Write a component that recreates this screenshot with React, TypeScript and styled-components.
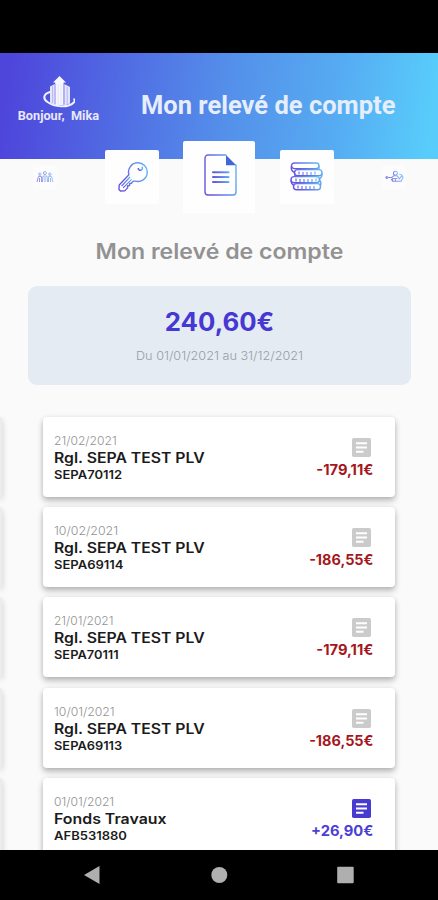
import React from 'react';
import styled, { createGlobalStyle, css } from 'styled-components';

const GlobalStyle = createGlobalStyle`
  *, *::before, *::after { box-sizing: border-box; }
  body { margin: 0; background: #000; font-family: Inter, 'Open Sans', sans-serif; }
`;

const Screen = styled.main`
  width: 100%;
  max-width: 438px;
  height: 900px;
  display: flex;
  flex-direction: column;
  overflow: hidden;
  background: #000;
`;

const StatusBar = styled.div`
  flex: 0 0 52.6px;
  background: #000;
`;

const Header = styled.header`
  flex: 0 0 106px;
  display: flex;
  align-items: flex-start;
  padding: 23.4px 0 0 17.5px;
  background: linear-gradient(97deg, #4e45db 2%, #5066e2 24%, #5490ea 52%, #56abf2 76%, #58cdfb 98%);
`;

const Greeting = styled.div`
  width: 82px;
  display: flex;
  flex-direction: column;
  align-items: center;
`;

const wide = css<{ $wide?: number }>`
  display: block;
  white-space: pre;
  transform: scaleX(${({ $wide = 1 }) => $wide});
`;

const GreetingText = styled.span<{ $wide?: number }>`
  ${wide}
  font: 700 12px/16px Roboto, sans-serif;
  color: #e9e8fc;
`;

const HeaderTitle = styled.h1<{ $wide?: number }>`
  ${wide}
  transform-origin: left;
  margin: 15px 0 0 41.5px;
  font: 700 25px/30px Roboto, sans-serif;
  color: #e6eefc;
`;

const Body = styled.section`
  flex: 1;
  min-height: 0;
  display: flex;
  flex-direction: column;
  background: #fafafa;
`;

const Tabs = styled.nav`
  flex: 0 0 72px;
  margin-top: -18px;
  padding-left: 1px;
  display: grid;
  grid-template-columns: repeat(5, 1fr);
  align-items: center;
  justify-items: center;
`;

const Tab = styled.button<{ $size: number }>`
  width: ${({ $size }) => $size}px;
  height: ${({ $size }) => $size}px;
  display: flex;
  align-items: center;
  justify-content: center;
  padding: 0;
  border: 0;
  border-radius: 2px;
  background: ${({ $size }) => ($size < 40 ? '#fcfcfc' : '#fefefe')};
`;

const PageTitle = styled.h2<{ $wide?: number }>`
  ${wide}
  margin: 26.4px 0 0 1px;
  text-align: center;
  font-size: 21px;
  line-height: 26px;
  font-weight: 600;
  color: #929292;
`;

const Balance = styled.div`
  flex: 0 0 99px;
  margin: 21px 27px 0 28px;
  padding-top: 20px;
  border-radius: 9px;
  background: #e5ebf3;
  text-align: center;
`;

const BalanceAmount = styled.strong<{ $wide?: number }>`
  ${wide}
  font-size: 25px;
  line-height: 32px;
  font-weight: 700;
  color: #4638d2;
`;

const BalancePeriod = styled.span<{ $wide?: number }>`
  ${wide}
  margin-top: 10px;
  font-size: 12px;
  line-height: 16px;
  font-weight: 300;
  color: #989ca3;
`;

const Carousel = styled.div`
  flex: 1;
  min-height: 0;
  margin-top: 16px;
  padding-top: 16px;
  display: grid;
  grid-template-columns: 1.5px 352px;
  column-gap: 41.5px;
  overflow: hidden;
`;

const Page = styled.div`
  display: flex;
  flex-direction: column;
  gap: 10.25px;
`;

const cardShadow = css`
  box-shadow: 0 4px 6px rgba(0, 0, 0, 0.22), 0 1px 5px rgba(0, 0, 0, 0.12);
`;

const Card = styled.article`
  ${cardShadow}
  flex: 0 0 80px;
  display: flex;
  justify-content: space-between;
  padding: 15px 22px 0 11px;
  border-radius: 4px;
  background: #fff;
`;

const CardEdge = styled.div`
  ${cardShadow}
  flex: 0 0 80px;
  border-radius: 0 4px 4px 0;
  background: #ececec;
`;

const Details = styled.div`
  display: flex;
  flex-direction: column;
  align-items: flex-start;
`;

const Line = styled.span<{ $wide?: number }>`
  ${wide}
  transform-origin: left;
  line-height: 17px;
`;

const DateLine = styled(Line)`
  font-size: 12px;
  font-weight: 300;
  color: #929292;
`;

const LabelLine = styled(Line)`
  font-size: 14px;
  font-weight: 600;
  color: #1b1b1b;
`;

const CodeLine = styled(Line)`
  font-size: 12px;
  font-weight: 600;
  color: #1b1b1b;
`;

const Side = styled.div`
  display: flex;
  flex-direction: column;
  align-items: flex-end;
  padding-top: 6px;
`;

const NoteIcon = styled.svg<{ $credit: boolean }>`
  width: 19px;
  height: 19px;
  margin-right: 2.5px;
  color: ${({ $credit }) => ($credit ? '#473bd0' : '#cbcbcb')};
`;

const Amount = styled.span<{ $wide?: number; $credit: boolean }>`
  ${wide}
  transform-origin: right;
  margin-top: 4px;
  font-size: 14px;
  line-height: 18px;
  font-weight: 700;
  color: ${({ $credit }) => ($credit ? '#4b40d4' : '#a5171c')};
`;

const SystemNav = styled.footer`
  flex: 0 0 50.5px;
  display: grid;
  grid-template-columns: repeat(3, 126.5px);
  justify-content: center;
  align-items: center;
  justify-items: center;
  background: #000;
`;

const NavShape = styled.svg`
  width: 20px;
  height: 20px;
  fill: #afafaf;
`;

const Gradient = ({ id }: { id: string }) => (
  <defs>
    <linearGradient id={id} x1="0" x2="1" y1="0.3" y2="0">
      <stop offset="0" stopColor="#6656df" />
      <stop offset="1" stopColor="#62baf5" />
    </linearGradient>
  </defs>
);

const Logo = () => (
  <svg width="32" height="32" viewBox="0 0 32 32" fill="none">
    <path d="M16.500 0 23 6.500h-2.400V29h-8.400V6.500H10z" fill="#f7f7ff" />
    <path d="M11.800 8v21L7 26.800V10.500zM21.200 8l5.800 3v16.500l-5.800 1.900z" fill="#e4e3fc" />
    <path d="M9.600 10v17M12.200 8v20M21.200 8v20M24.200 11v17" stroke="#9d98ec" strokeWidth=".6" />
    <path d="M15.200 8v21M18 8v21" stroke="#d2d1f8" strokeWidth=".5" />
    <path d="M7 16C.5 18-.5 22.500 4.500 26c6.500 4.800 20.500 6.600 26.500.2 1-1 .8-2 .2-2.800" stroke="#f1f1ff" strokeWidth="2" strokeLinecap="round" />
  </svg>
);

const KeyGlyph = styled.svg`
  width: 30px;
  height: 30px;
  margin-left: 2px;
`;

const KeyIcon = () => (
  <KeyGlyph viewBox="0 0 32 32" fill="none" stroke="url(#key)" strokeWidth="1.500" strokeLinejoin="round">
    <Gradient id="key" />
    <path d="M11.600 13.500A10 10 0 1 1 18.500 20.400l-2.200 0-2 2.300-1.700.2-.3 2.100-2 .4-.1 2.200-3 3.200-4.600.2-1.600-1.600.3-4.800z" />
    <path d="M21.500 6.500a2.300 2.300 0 1 0 4-1.500" />
    <path d="m12.800 16-9 9.700M14.500 18.500l-9 9.200" strokeWidth="1.200" />
  </KeyGlyph>
);

const DocumentGlyph = styled.svg`
  width: 33px;
  height: 42px;
  margin: 0 0 4px 1.5px;
`;

const DocumentIcon = () => (
  <DocumentGlyph viewBox="0 0 33 42" fill="none" stroke="url(#doc)" strokeWidth="1.400">
    <Gradient id="doc" />
    <path d="M22.300 1H4a3 3 0 0 0-3 3v34a3 3 0 0 0 3 3h25a3 3 0 0 0 3-3V10.500" />
    <path d="M22 1v10.300h10.200z" fill="#3f67d8" stroke="none" />
    <g fill="url(#doc)" stroke="none">
      <rect x="8" y="17.200" width="17.500" height="2" rx="1" />
      <rect x="8" y="22.100" width="17.500" height="2" rx="1" />
      <rect x="8" y="27" width="17.500" height="2" rx="1" />
    </g>
  </DocumentGlyph>
);

const CoinsIcon = () => (
  <svg width="33" height="29" viewBox="0 0 33 29" fill="none" stroke="url(#coins)" strokeWidth="1.400">
    <Gradient id="coins" />
    <rect x="1.500" y="1" width="27.500" height="5.600" rx="2.800" />
    <path d="M1.500 4c-.8 3.500.5 5.500 3.500 6.500M29 4v3.500" />
    <rect x="4.500" y="7.600" width="27.500" height="6.200" rx="3.100" />
    <rect x="1" y="14.600" width="28.500" height="6.200" rx="3.100" />
    <rect x="3.500" y="21.600" width="27" height="6.200" rx="3.100" />
    <path d="M4.500 11c0 2 .5 3 1.500 3.800M32 11c.3 3-.5 5-3 6M1 18c0 3 1 4.500 3 5.500M29.500 18c1.500 1.500 1.600 4 .8 6" />
    <path d="M9 9.500v3M13 10v3M17 10v3M21 10v3M25 9.500v3M6 16.500v3M10 17v3M14 17v3M18 17v3M22 17v3M26 16.500v3M8 23.500v3M12 24v3M16 24v3M20 24v3M24 24v3" strokeWidth="1.100" />
  </svg>
);

const PeopleIcon = () => (
  <svg width="18" height="12" viewBox="0 0 18 12" fill="none" stroke="url(#people)" strokeWidth="1" opacity=".65">
    <Gradient id="people" />
    <circle cx="9" cy="2" r="1.500" />
    <circle cx="4" cy="3.200" r="1.200" />
    <circle cx="14" cy="3.200" r="1.200" />
    <path d="M6.500 11 7 5h4l.5 6M9 6v5M1 11l1.500-5.500h3V11M17 11l-1.500-5.500h-3V11M3.500 7v4M14.500 7v4" />
  </svg>
);

const ServiceIcon = () => (
  <svg width="19" height="13" viewBox="0 0 20 13" fill="none" stroke="url(#service)" strokeWidth="1.100" opacity=".75">
    <Gradient id="service" />
    <circle cx="11" cy="3" r="2.100" />
    <circle cx="2" cy="7.500" r="1" fill="#6760df" />
    <path d="M3 7.500h4L9.500 5.500 13 6l2 3 3-3.500 1 2-2 4H8L6.500 9M8 11V8.500h5M11 8.500V11M15 4l3 1" />
  </svg>
);

const tabs = [
  { name: 'Assemblées', size: 24, icon: <PeopleIcon /> },
  { name: 'Mes lots', size: 54, icon: <KeyIcon /> },
  { name: 'Mon relevé de compte', size: 72, icon: <DocumentIcon /> },
  { name: 'Paiements', size: 54, icon: <CoinsIcon /> },
  { name: 'Services', size: 24, icon: <ServiceIcon /> },
];

const entries = [
  { date: '21/02/2021', label: 'Rgl. SEPA TEST PLV', code: 'SEPA70112', amount: '-179,11€', wide: [1.01, 1.125, 1.085, 1.05] },
  { date: '10/02/2021', label: 'Rgl. SEPA TEST PLV', code: 'SEPA69114', amount: '-186,55€', wide: [1.03, 1.125, 1.085, 1.03] },
  { date: '21/01/2021', label: 'Rgl. SEPA TEST PLV', code: 'SEPA70111', amount: '-179,11€', wide: [1, 1.125, 1.07, 1.05] },
  { date: '10/01/2021', label: 'Rgl. SEPA TEST PLV', code: 'SEPA69113', amount: '-186,55€', wide: [1.02, 1.125, 1.07, 1.03] },
  { date: '01/01/2021', label: 'Fonds Travaux', code: 'AFB531880', amount: '+26,90€', wide: [1.01, 1.135, 1.085, 1.05] },
];

export default function App() {
  return (
    <Screen>
      <GlobalStyle />
      <StatusBar />
      <Header>
        <Greeting>
          <Logo />
          <GreetingText $wide={1.06}>{'Bonjour,  Mika'}</GreetingText>
        </Greeting>
        <HeaderTitle $wide={1.02}>Mon relevé de compte</HeaderTitle>
      </Header>
      <Body>
        <Tabs>
          {tabs.map((tab) => (
            <Tab key={tab.name} $size={tab.size} aria-label={tab.name}>
              {tab.icon}
            </Tab>
          ))}
        </Tabs>
        <PageTitle $wide={1.1}>Mon relevé de compte</PageTitle>
        <Balance>
          <BalanceAmount $wide={1.03}>240,60€</BalanceAmount>
          <BalancePeriod $wide={1.055}>Du 01/01/2021 au 31/12/2021</BalancePeriod>
        </Balance>
        <Carousel>
          <Page>
            {entries.map((entry) => (
              <CardEdge key={entry.date} />
            ))}
          </Page>
          <Page>
            {entries.map((entry) => {
              const credit = entry.amount.startsWith('+');
              return (
                <Card key={entry.date}>
                  <Details>
                    <DateLine $wide={entry.wide[0]}>{entry.date}</DateLine>
                    <LabelLine $wide={entry.wide[1]}>{entry.label}</LabelLine>
                    <CodeLine $wide={entry.wide[2]}>{entry.code}</CodeLine>
                  </Details>
                  <Side>
                    <NoteIcon viewBox="0 0 19 19" $credit={credit}>
                      <rect width="19" height="19" rx="1.800" fill="currentColor" />
                      <path d="M4 5.200h11M4 9.500h11M4 13.800h7.500" stroke="#fff" strokeWidth="1.900" />
                    </NoteIcon>
                    <Amount $wide={entry.wide[3]} $credit={credit}>
                      {entry.amount}
                    </Amount>
                  </Side>
                </Card>
              );
            })}
          </Page>
        </Carousel>
      </Body>
      <SystemNav>
        <NavShape viewBox="0 0 20 20">
          <path d="M1 10 16.500 1v18z" />
        </NavShape>
        <NavShape viewBox="0 0 20 20">
          <circle cx="10.300" cy="10" r="8" />
        </NavShape>
        <NavShape viewBox="0 0 20 20">
          <rect x="1.200" y="1.800" width="16.500" height="16.400" rx="1" />
        </NavShape>
      </SystemNav>
    </Screen>
  );
}
